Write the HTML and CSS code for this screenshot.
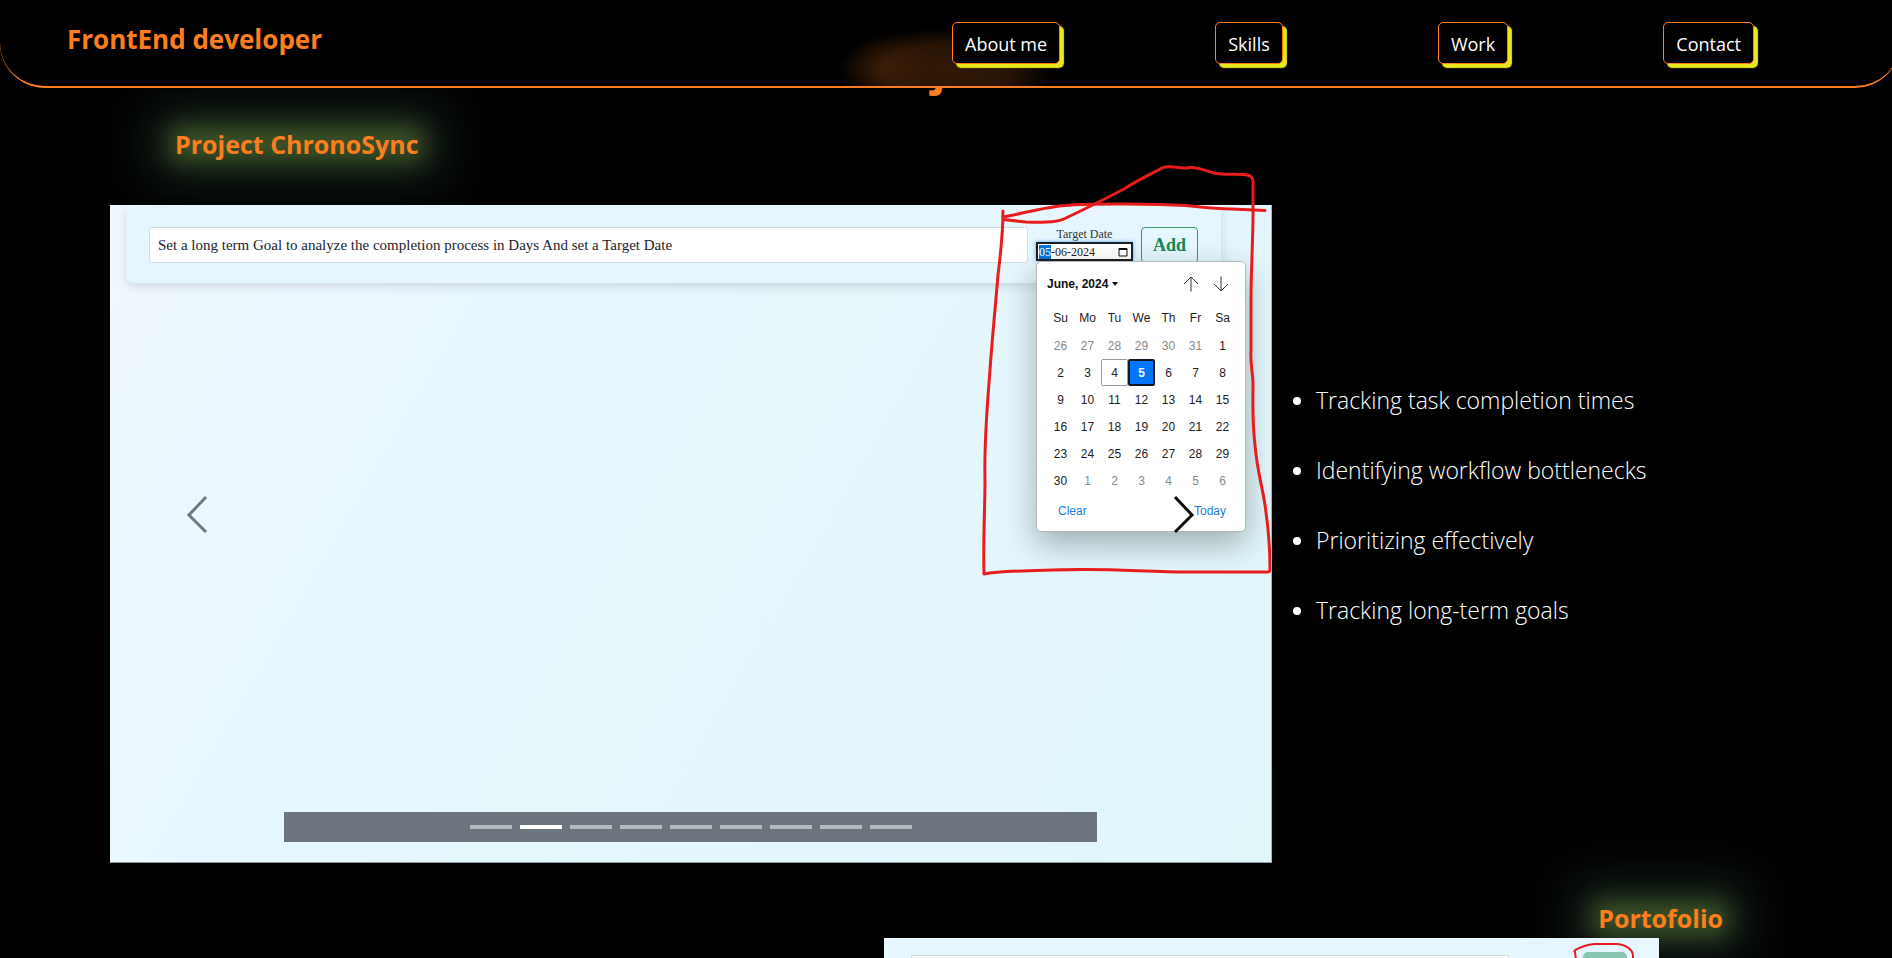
FILE: index.html
```html
<!DOCTYPE html>
<html lang="en">
<head>
<meta charset="utf-8">
<meta name="viewport" content="width=device-width, initial-scale=1">
<title>FrontEnd developer</title>
<link rel="stylesheet" href="styles.css">
</head>
<body>
<header class="site-header">
  <p class="brand">FrontEnd developer</p>
  <nav class="site-nav">
    <a class="nav-link" href="#about">About me</a>
    <a class="nav-link" href="#skills">Skills</a>
    <a class="nav-link" href="#work">Work</a>
    <a class="nav-link" href="#contact">Contact</a>
  </nav>
</header>

<main class="page" id="work">
  <h1 class="page-title">Projects</h1>

  <section class="project">
    <h2 class="project-title"><span class="glow">Project ChronoSync</span></h2>
    <div class="project-row">
      <div class="carousel">
        <form class="goal-bar">
          <input class="goal-input" type="text" aria-label="Goal" value="Set a long term Goal to analyze the completion process in Days And set a Target Date">
          <div class="date-field">
            <label class="date-label" for="target">Target Date</label>
            <div class="date-box">
              <input class="date-input" id="target" type="text" value="05-06-2024">
              <svg class="date-icon" viewBox="0 0 10 10"><path d="M1 1.5h8v7.5h-8z" fill="none" stroke="#111"/><path d="M1 2h8" stroke="#111" stroke-width="2"/></svg>
            </div>
            <div class="picker">
              <div class="picker-head">
                <button class="picker-month" type="button">June, 2024 <span class="caret"></span></button>
                <button class="picker-step" type="button" aria-label="Previous month"><svg viewBox="0 0 16 16"><path d="M8 15.500V1M1 8l7-7 7 7"/></svg></button>
                <button class="picker-step" type="button" aria-label="Next month"><svg viewBox="0 0 16 16"><path d="M8 .5V15M1 8l7 7 7-7"/></svg></button>
              </div>
              <table class="days">
                <thead><tr><th>Su</th><th>Mo</th><th>Tu</th><th>We</th><th>Th</th><th>Fr</th><th>Sa</th></tr></thead>
                <tbody>
                  <tr><td class="out">26</td><td class="out">27</td><td class="out">28</td><td class="out">29</td><td class="out">30</td><td class="out">31</td><td>1</td></tr>
                  <tr><td>2</td><td>3</td><td class="today">4</td><td class="chosen">5</td><td>6</td><td>7</td><td>8</td></tr>
                  <tr><td>9</td><td>10</td><td>11</td><td>12</td><td>13</td><td>14</td><td>15</td></tr>
                  <tr><td>16</td><td>17</td><td>18</td><td>19</td><td>20</td><td>21</td><td>22</td></tr>
                  <tr><td>23</td><td>24</td><td>25</td><td>26</td><td>27</td><td>28</td><td>29</td></tr>
                  <tr><td>30</td><td class="out">1</td><td class="out">2</td><td class="out">3</td><td class="out">4</td><td class="out">5</td><td class="out">6</td></tr>
                </tbody>
              </table>
              <div class="picker-foot">
                <button class="picker-action" type="button">Clear</button>
                <button class="picker-action" type="button">Today</button>
              </div>
            </div>
          </div>
          <button class="add-button" type="button">Add</button>
        </form>

        <svg class="marker" viewBox="971 155 300 430" aria-hidden="true">
          <path d="M1003 211C1003 235 1001 250 998 275C996 300 992 340 990 370C987 410 984 440 985 480C985 510 983 540 984 574C1000 571 1040 570 1080 569.500C1120 569 1150 572 1190 572H1268Q1270 572 1270 569C1270 545 1268 525 1265 505C1262 485 1257 470 1255 445C1252 420 1253 400 1253 385C1253 372 1250 365 1251 350V300C1251 270 1253 240 1253 215V186C1254 177 1251 175 1243 174.500C1232 174 1222 175 1214 173C1205 171 1199 167 1190 167.500C1180 170 1170 164 1162 168C1145 177 1135 182 1124 189C1105 199 1085 209 1068 217C1056 224 1040 222 1026 222L1003 219.500"/>
          <path d="M1003 217C1025 213 1045 207 1065 205.500C1090 203 1160 204 1185 205.500C1200 207 1215 209 1232 209L1265 210.500"/>
        </svg>

        <button class="arrow arrow-prev" type="button" aria-label="Previous"><svg viewBox="0 0 22 40"><path d="M20 2 3 20l17 17"/></svg></button>
        <button class="arrow arrow-next" type="button" aria-label="Next"><svg viewBox="0 0 22 40"><path d="M2 2l17 18L2 37"/></svg></button>

        <div class="indicators">
          <button class="dash" type="button" aria-label="Slide 1"></button>
          <button class="dash dash-on" type="button" aria-label="Slide 2"></button>
          <button class="dash" type="button" aria-label="Slide 3"></button>
          <button class="dash" type="button" aria-label="Slide 4"></button>
          <button class="dash" type="button" aria-label="Slide 5"></button>
          <button class="dash" type="button" aria-label="Slide 6"></button>
          <button class="dash" type="button" aria-label="Slide 7"></button>
          <button class="dash" type="button" aria-label="Slide 8"></button>
          <button class="dash" type="button" aria-label="Slide 9"></button>
        </div>
      </div>
      <ul class="features">
        <li>Tracking task completion times</li>
        <li>Identifying workflow bottlenecks</li>
        <li>Prioritizing effectively</li>
        <li>Tracking long-term goals</li>
      </ul>
    </div>
  </section>

  <section class="project project-right">
    <h2 class="project-title"><span class="glow">Portofolio</span></h2>
    <div class="preview">
      <div class="preview-card">
        <div class="preview-field"></div>
        <div class="preview-button"></div>
      </div>
      <svg class="preview-marker" viewBox="0 0 70 40" aria-hidden="true"><path d="M7 38 4 13C0 11 18 5 24 5h22c10 1 16 6 16 12v23"/></svg>
    </div>
  </section>
</main>
<script src="script.js"></script>
</body>
</html>
```
FILE: script.js
```js
const target = document.getElementById("target");
target.focus({ preventScroll: true });
target.setSelectionRange(0, 2);
```
FILE: styles.css
```css
* { box-sizing: border-box; }

html, body { height: 100%; }

body {
  margin: 0;
  overflow: hidden;
  background: #000;
  color: #fff;
  font-family: "Open Sans", "Noto Sans", sans-serif;
}

button, input { font: inherit; margin: 0; }
button { background: none; border: 0; padding: 0; cursor: pointer; }

.site-header {
  position: fixed;
  z-index: 10;
  top: 0;
  left: 0;
  right: -8px;
  height: 88px;
  display: flex;
  justify-content: space-between;
  align-items: flex-start;
  padding: 0 146px 0 67px;
  border-bottom: 2px solid #fd7e1e;
  border-radius: 0 0 45px 45px;
  background:
    radial-gradient(ellipse 46px 36px at calc(50% - 66px) 66px, rgba(253, 126, 30, 0.08), transparent),
    radial-gradient(ellipse 108px 42px at calc(50% - 4px) 70px, rgba(253, 126, 30, 0.2), rgba(253, 126, 30, 0.16) 60%, transparent),
    #000;
}

.brand {
  margin: 20px 0 0;
  font-size: 26px;
  line-height: 38px;
  font-weight: 700;
  color: #fd7e1e;
}

.site-nav {
  width: 802px;
  display: flex;
  justify-content: space-between;
  margin-top: 22px;
}

.nav-link {
  height: 42px;
  padding: 0 12px;
  border: 1px solid #fd7e1e;
  border-radius: 5px;
  background: #000;
  box-shadow: 4px 4px 1px #e8e81c;
  color: #fff;
  font-size: 18px;
  line-height: 42px;
  text-decoration: none;
}

.page { padding-top: 36px; }

.page-title {
  margin: 0;
  font-size: 44px;
  line-height: 64px;
  font-weight: 700;
  text-align: center;
  color: #fd7e1e;
}

.project-title {
  margin: 0;
  padding: 24px 0 41px 175px;
  font-size: 25px;
  line-height: 40px;
  font-weight: 700;
  color: #fd7e1e;
}

.glow { position: relative; isolation: isolate; display: inline-block; }

.glow::before, .glow::after {
  content: "";
  position: absolute;
  z-index: -1;
}

.glow::before { inset: 4px -4px; background: #52681f; filter: blur(12px); }
.glow::after { inset: -20px -28px; background: rgba(40, 66, 56, 0.45); filter: blur(24px); }

.project-row { display: flex; align-items: center; padding-left: 110px; }

.carousel {
  position: relative;
  width: 1162px;
  flex: none;
  aspect-ratio: 1162 / 658;
  border-right: 1px solid #a7b5b8;
  border-bottom: 1px solid #8d999c;
  background: linear-gradient(120deg, #f0f8ff, #e8f7ff 30%, #e4f7fb 50%, #e3f6fd 75%, #e0f7fa);
}

.goal-bar {
  display: flex;
  align-items: flex-start;
  gap: 8px;
  height: 78px;
  margin: 0 50px 0 16px;
  padding: 22px 23px 0 23px;
  border-radius: 0 0 8px 8px;
  background: #e5f6ff;
  box-shadow: 0 4px 10px rgba(0, 0, 0, 0.12);
  font-family: "Liberation Serif", serif;
  color: #333;
}

.goal-input {
  flex: 1;
  height: 36px;
  min-width: 0;
  padding: 0 8px;
  border: 1px solid #d5dce2;
  border-radius: 3px;
  background: #fff;
  color: #212529;
  font-size: 15px;
}

.date-field { position: relative; width: 97px; text-align: center; }
.date-label { display: block; font-size: 12px; line-height: 15px; }

.date-box {
  display: flex;
  align-items: center;
  height: 19px;
  padding: 0 3px 0 1px;
  border: 2px solid #1d1f22;
  background: #fff;
  box-shadow: 0 0 4px #5aa9f5;
}

.date-input {
  width: 74px;
  flex: 1;
  min-width: 0;
  padding: 0;
  border: 0;
  outline: 0;
  background: none;
  color: #222;
  font-size: 12px;
  line-height: 14px;
}

.date-input::selection { background: #0078d7; color: #fff; }
.date-icon { width: 10px; height: 10px; }

.add-button {
  width: 57px;
  height: 36px;
  border: 1px solid #3d9970;
  border-radius: 4px;
  color: #198754;
  font-size: 18px;
  font-weight: 700;
  line-height: 32px;
}

.picker {
  position: absolute;
  z-index: 2;
  top: 34px;
  left: 0;
  width: 210px;
  height: 271px;
  padding: 9px 10px;
  border: 1px solid #b4b8ba;
  border-radius: 5px;
  background: #fff;
  box-shadow: 0 12px 32px rgba(0, 0, 0, 0.3);
  color: #222;
  font-family: "Liberation Sans", sans-serif;
  font-size: 12px;
}

.picker-head { display: flex; align-items: center; gap: 14px; height: 26px; }
.picker-month { flex: 1; text-align: left; font-size: 12px; font-weight: 700; color: #111; white-space: nowrap; }

.caret {
  display: inline-block;
  border: 3px solid transparent;
  border-top: 4px solid #111;
  border-bottom: 0;
  vertical-align: 2px;
}

.picker-step { width: 16px; height: 16px; }
.picker-step:last-child { margin-right: 6px; }
.picker-step svg { display: block; fill: none; stroke: #333; stroke-width: 1; }

.days { border-collapse: separate; border-spacing: 0; margin-top: 6px; table-layout: fixed; width: 189px; }
.days th, .days td { width: 27px; height: 27px; padding: 0; text-align: center; font-weight: 400; font-size: 12px; }
.days th { height: 29px; }
.days .out { color: #8a8a8a; }
.days .today { border: 1px solid #9a9a9a; border-radius: 2px; }
.days .chosen { border: 2px solid #101828; border-radius: 2px; background: #0075ff; color: #fff; font-weight: 700; }

.picker-foot { display: flex; justify-content: space-between; padding: 8px 9px 0 11px; }
.picker-action { color: #1a7fdc; font-size: 12px; line-height: 18px; }

.marker {
  position: absolute;
  z-index: 3;
  top: -50px;
  right: 0;
  width: 300px;
  height: 430px;
  fill: none;
  stroke: #e81c1c;
  stroke-width: 3;
  stroke-linejoin: round;
  stroke-linecap: round;
  pointer-events: none;
}

.arrow {
  position: absolute;
  z-index: 4;
  top: 0;
  bottom: 0;
  width: 15%;
  display: flex;
  align-items: center;
  justify-content: center;
  padding-bottom: 38px;
}

.arrow svg { width: 22px; height: 40px; fill: none; stroke: #111; stroke-width: 3; }
.arrow-prev { left: 0; opacity: 0.55; }
.arrow-next { right: 0; }

.indicators {
  position: absolute;
  left: 15%;
  right: 15%;
  bottom: 20px;
  height: 30px;
  display: flex;
  justify-content: center;
  align-items: center;
  gap: 8px;
  background: #6c757d;
}

.dash { width: 42px; height: 4px; background: #fff; opacity: 0.5; }
.dash-on { opacity: 1; }

.features {
  margin: 0;
  padding: 0 0 24px 44px;
  font-size: 23px;
  line-height: 36px;
  font-weight: 300;
}

.features li { margin-bottom: 34px; }

.project-right { display: flex; flex-direction: column; align-items: flex-end; }
.project-right .project-title { padding: 36px 169px 0 0; line-height: 39px; }

.preview {
  position: relative;
  width: 775px;
  height: 438px;
  margin-right: 233px;
  background: #e9f7ff;
}

.preview-card { display: flex; justify-content: space-between; margin: 0 20px 0 11px; padding: 14px 12px 0 16px; background: #e5f6ff; }
.preview-field { width: 598px; height: 24px; margin-top: 3px; border: 1px solid #d5dce2; background: #fff; }
.preview-button { width: 44px; height: 24px; border-radius: 5px; background: #86c5ae; }

.preview-marker {
  position: absolute;
  top: 1px;
  right: 18px;
  width: 70px;
  height: 40px;
  fill: none;
  stroke: #e81c1c;
  stroke-width: 2;
}
```
